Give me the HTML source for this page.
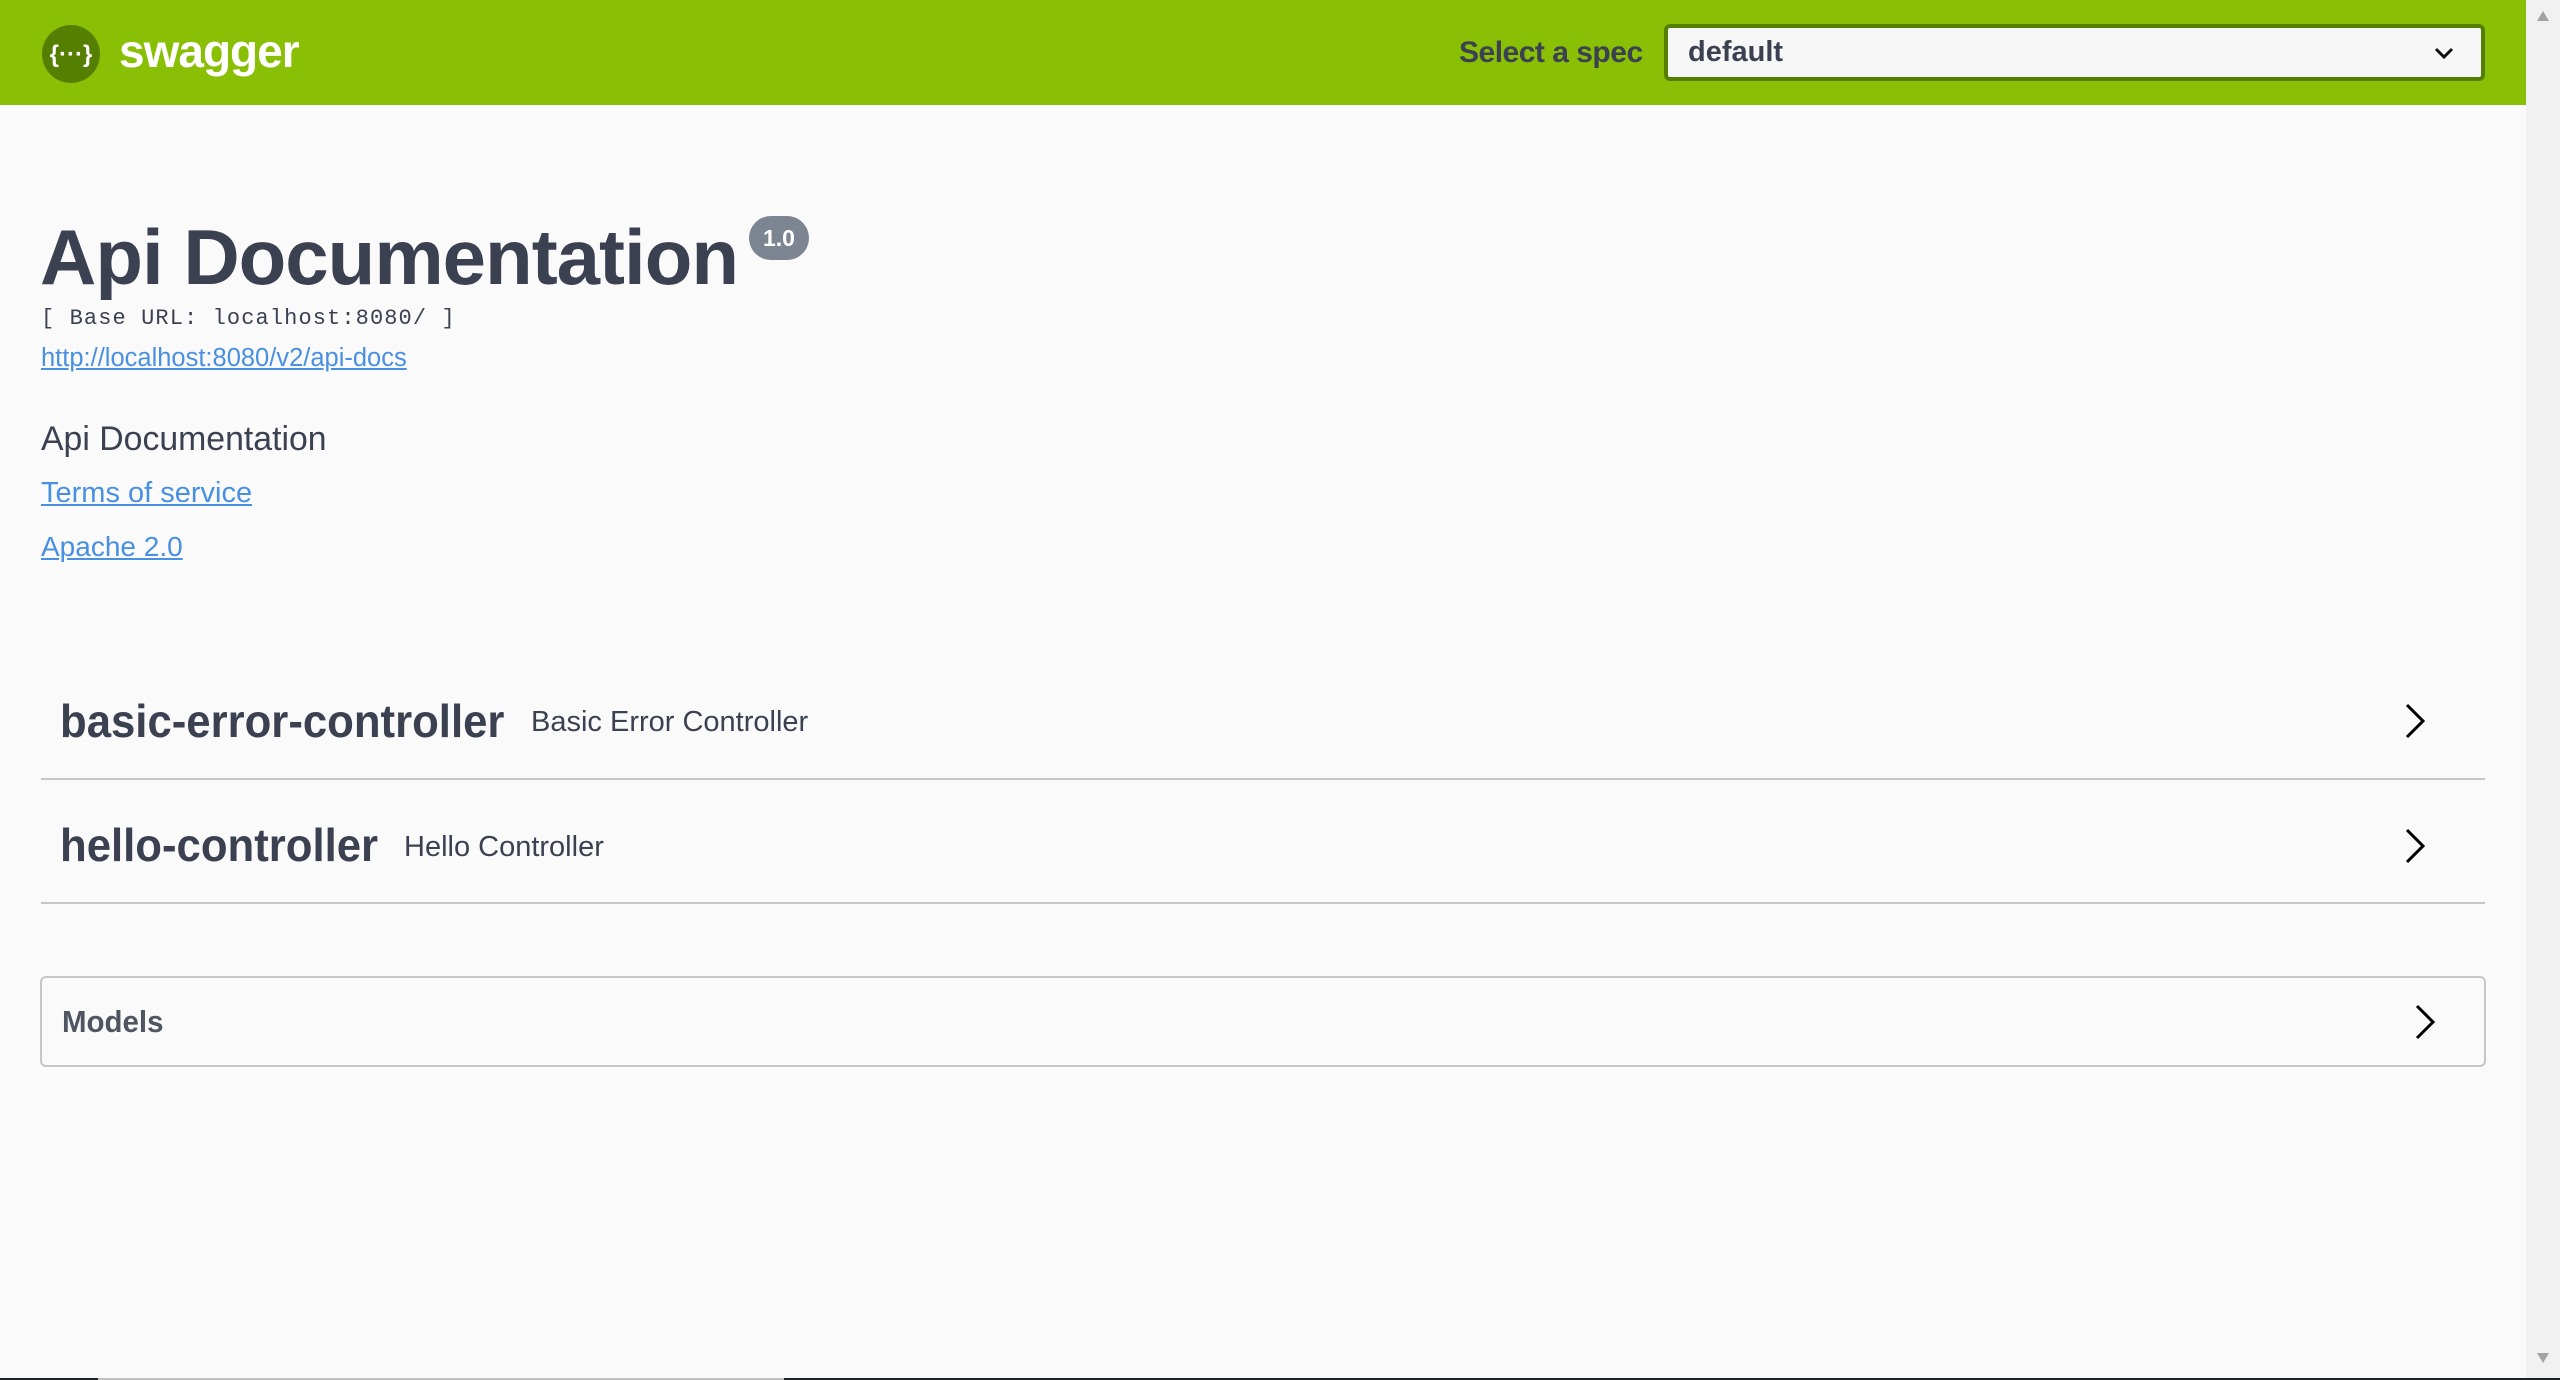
<!DOCTYPE html>
<html><head><meta charset="utf-8">
<style>
*{margin:0;padding:0;box-sizing:border-box}
html,body{width:2560px;height:1380px;overflow:hidden;background:#fafafa;font-family:"Liberation Sans",sans-serif;color:#3b4151}
.abs{position:absolute;white-space:nowrap}
#hdr{position:absolute;left:0;top:0;width:2526px;height:105px;background:#89bf04}
#sb{position:absolute;left:2526px;top:0;width:34px;height:1378px;background:#f1f1f1}
.sq{display:inline-block;transform-origin:0 50%}
a{color:#4990e2;text-decoration:underline}
.line{position:absolute;left:41px;width:2444px;height:2px;background:#c4c6ca}
.chev{position:absolute}
</style></head><body>
<div id="hdr">
  <svg class="abs" style="left:42px;top:25px" width="58" height="58" viewBox="0 0 58 58">
    <circle cx="29" cy="29" r="29" fill="#547f00"/>
    <text x="29" y="37" text-anchor="middle" fill="#fff" font-family="Liberation Sans" font-size="24" font-weight="bold">{···}</text>
  </svg>
  <div class="abs" style="left:119px;top:24px;font-size:46px;font-weight:bold;color:#fff;letter-spacing:-1px">swagger</div>
  <div class="abs" style="left:1459px;top:36px;font-size:30px;font-weight:bold;color:#3b4151;letter-spacing:-0.5px">Select a spec</div>
  <div class="abs" style="left:1664px;top:24px;width:821px;height:57px;background:#f7f7f7;border:4px solid #547f00;border-radius:6px">
    <div class="abs" style="left:20px;top:8px;font-size:29px;font-weight:bold;color:#3b4151">default</div>
    <svg class="abs" style="left:765px;top:17px" width="22" height="16" viewBox="0 0 22 16"><path d="M3 4 L11 12 L19 4" fill="none" stroke="#111" stroke-width="3"/></svg>
  </div>
</div>
<div id="sb">
  <svg class="abs" style="left:10px;top:10px" width="14" height="12"><path d="M7 1 L13 11 L1 11Z" fill="#a3a3a3"/></svg>
  <svg class="abs" style="left:10px;top:1352px" width="14" height="12"><path d="M1 1 L13 1 L7 11Z" fill="#a3a3a3"/></svg>
</div>

<div class="abs" style="left:40px;top:212px;font-size:78px;font-weight:bold;color:#3b4151;letter-spacing:-1px">Api Documentation</div>
<div class="abs" style="left:749px;top:216px;width:60px;height:44px;border-radius:22px;background:#7d8492;color:#fff;font-size:23px;font-weight:bold;text-align:center;line-height:44px">1.0</div>
<div class="abs" style="left:41px;top:306px;font-family:'Liberation Mono',monospace;font-size:22px;color:#3b4151;letter-spacing:1.1px">[ Base URL: localhost:8080/ ]</div>
<div class="abs" style="left:41px;top:344px;font-size:25.5px"><a>http://localhost:8080/v2/api-docs</a></div>
<div class="abs" style="left:41px;top:420px;font-size:33.8px;color:#3b4151">Api Documentation</div>
<div class="abs" style="left:41px;top:477px;font-size:29px"><a>Terms of service</a></div>
<div class="abs" style="left:41px;top:531px;font-size:28px"><a>Apache 2.0</a></div>

<div class="abs" style="left:60px;top:694px;font-size:46px;font-weight:bold;color:#3b4151"><span class="sq" style="transform:scaleX(0.95)">basic-error-controller</span></div>
<div class="abs" style="left:531px;top:706px;font-size:29px;color:#3b4151">Basic Error Controller</div>
<svg class="chev" style="left:2402px;top:702px" width="26" height="38" viewBox="0 0 26 38"><path d="M5 3 L21 19 L5 35" fill="none" stroke="#000" stroke-width="3"/></svg>
<div class="line" style="top:778px"></div>

<div class="abs" style="left:60px;top:818px;font-size:46px;font-weight:bold;color:#3b4151"><span class="sq" style="transform:scaleX(0.95)">hello-controller</span></div>
<div class="abs" style="left:404px;top:831px;font-size:29px;color:#3b4151">Hello Controller</div>
<svg class="chev" style="left:2402px;top:827px" width="26" height="38" viewBox="0 0 26 38"><path d="M5 3 L21 19 L5 35" fill="none" stroke="#000" stroke-width="3"/></svg>
<div class="line" style="top:902px"></div>

<div class="abs" style="left:40px;top:976px;width:2446px;height:91px;border:2px solid #c4c6ca;border-radius:6px"></div>
<div class="abs" style="left:62px;top:1004px;font-size:31px;font-weight:bold;color:#505562"><span class="sq" style="transform:scaleX(0.95)">Models</span></div>
<svg class="chev" style="left:2412px;top:1003px" width="26" height="38" viewBox="0 0 26 38"><path d="M5 3 L21 19 L5 35" fill="none" stroke="#000" stroke-width="3"/></svg>

<div class="abs" style="left:0;top:1378px;width:2560px;height:2px;background:#202124"></div>
<div class="abs" style="left:98px;top:1378px;width:686px;height:2px;background:#c0c0c0"></div>
</body></html>
